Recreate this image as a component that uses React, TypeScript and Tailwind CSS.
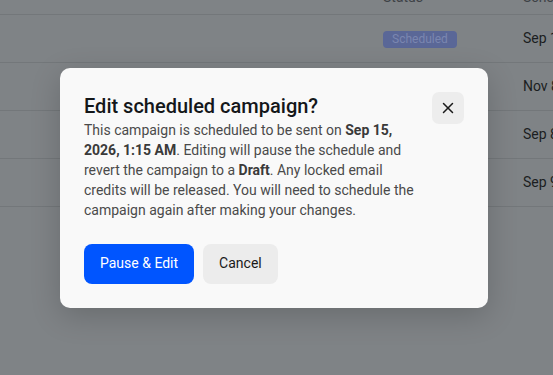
import React from "react";
import { X } from "lucide-react";

const rows = [
  { date: "Sep 15, 2026" },
  { date: "Nov 8, 2025" },
  { date: "Sep 8, 2025" },
  { date: "Sep 9, 2025" },
];

export default function App() {
  return (
    <div
      className="relative w-[553px] h-[375px] overflow-hidden bg-[#7f8386]"
      style={{ fontFamily: "Roboto, 'Noto Sans', sans-serif" }}
    >
      {/* background table (dimmed) */}
      <div className="-mt-[33px] w-[700px]">
        <div className="flex h-[48px] items-end pb-[6px] border-b border-[#73777a] text-[14px] text-[#3e4246]">
          <div className="w-[383px]" />
          <div className="w-[140px]">Status</div>
          <div className="w-[140px]">Scheduled</div>
        </div>
        {rows.map((r) => (
          <div
            key={r.date}
            className="flex h-[48px] items-center border-b border-[#73777a] text-[14px] text-[#1b1e21]"
          >
            <div className="w-[383px]" />
            <div className="w-[140px]">
              <span className="inline-flex h-[17px] items-center rounded-[4px] bg-[#5a6797] px-[9px] text-[12px] text-[#7a86b0]">
                Scheduled
              </span>
            </div>
            <div className="w-[140px]">{r.date}</div>
          </div>
        ))}
      </div>

      {/* dialog */}
      <div className="absolute inset-0 flex items-center justify-center pr-[5px]">
        <div className="w-[428px] rounded-[10px] bg-[#f9f9f9] p-[24px] shadow-[0_8px_30px_rgba(0,0,0,0.18)]">
          <div className="flex gap-[16px]">
            <div className="flex-1">
              <h2 className="text-[20px] leading-[28px] font-medium text-[#14171a]">
                Edit scheduled campaign?
              </h2>
              <p className="text-[14px] leading-[20px] text-[#4a4a4a]">
                This campaign is scheduled to be sent on{" "}
                <span className="font-bold text-[#3a3a3a]">Sep 15, 2026, 1:15 AM</span>. Editing will
                pause the schedule and revert the campaign to a{" "}
                <span className="font-bold text-[#3a3a3a]">Draft</span>. Any locked email credits will be
                released. You will need to schedule the campaign again after making your changes.
              </p>
            </div>
            <button className="flex h-[32px] w-[32px] shrink-0 items-center justify-center rounded-[7px] bg-[#ededed] text-[#1a1a1a]">
              <X size={18} strokeWidth={2} />
            </button>
          </div>
          <div className="mt-[24px] flex gap-[9px]">
            <button className="h-[40px] rounded-[8px] bg-[#0055ff] px-[16px] text-[14px] text-white">
              Pause &amp; Edit
            </button>
            <button className="h-[40px] rounded-[8px] bg-[#ececec] px-[16px] text-[14px] text-[#1a1a1a]">
              Cancel
            </button>
          </div>
        </div>
      </div>
    </div>
  );
}
